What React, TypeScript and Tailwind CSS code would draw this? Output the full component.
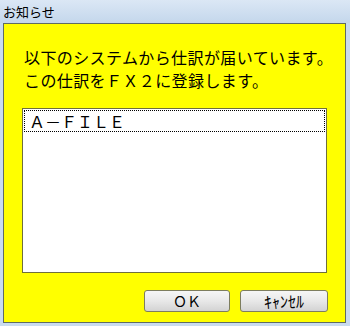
import React from "react";

const jp = { fontFamily: '"Noto Sans CJK JP", "Noto Sans", sans-serif' };

function Button({ label, w, size }: { label: string; w: string; size: string }) {
  return (
    <button
      className={`${w} ${size} h-[22px] rounded-[3px] border border-[#7d7d5e] bg-gradient-to-b from-[#f6f6f6] via-[#e8e8e8] to-[#d3d3d3] flex items-center justify-center text-black leading-none`}
      style={jp}
    >
      {label}
    </button>
  );
}

export default function App() {
  return (
    <div className="w-[350px] h-[326px] bg-[#c9dbef] flex flex-col overflow-hidden" style={jp}>
      {/* title bar */}
      <div className="h-[23px] flex items-center pl-[3px] bg-gradient-to-b from-[#dbe7f5] to-[#c4d7ec]">
        <span className="text-[13px] text-black leading-none">お知らせ</span>
      </div>

      {/* client area */}
      <div className="flex-1 pl-[3px] pr-[4px] pb-[3px]">
        <div className="h-full border border-[#5f6b63] bg-[#ffff00] flex flex-col">
          <div className="pt-[22px] pl-[20px] text-[16px] leading-[23px] tracking-[0.4px] text-black whitespace-nowrap">
            <p>以下のシステムから仕訳が届いています。</p>
            <p>この仕訳をＦＸ２に登録します。</p>
          </div>

          <div className="mt-[16px] ml-[18px] w-[305px] h-[165px] border border-[#6f6f3c] bg-white p-[1px]">
            <div className="h-[22px] border border-dotted border-black flex items-center pl-[4px] text-[16px] leading-none text-black">
              Ａ－ＦＩＬＥ
            </div>
          </div>

          <div className="mt-[17px] flex justify-end gap-[10px] pr-[17px]">
            <Button label="ＯＫ" w="w-[86px]" size="text-[14px]" />
            <Button label="ｷｬﾝｾﾙ" w="w-[88px]" size="text-[16px]" />
          </div>
        </div>
      </div>
    </div>
  );
}
